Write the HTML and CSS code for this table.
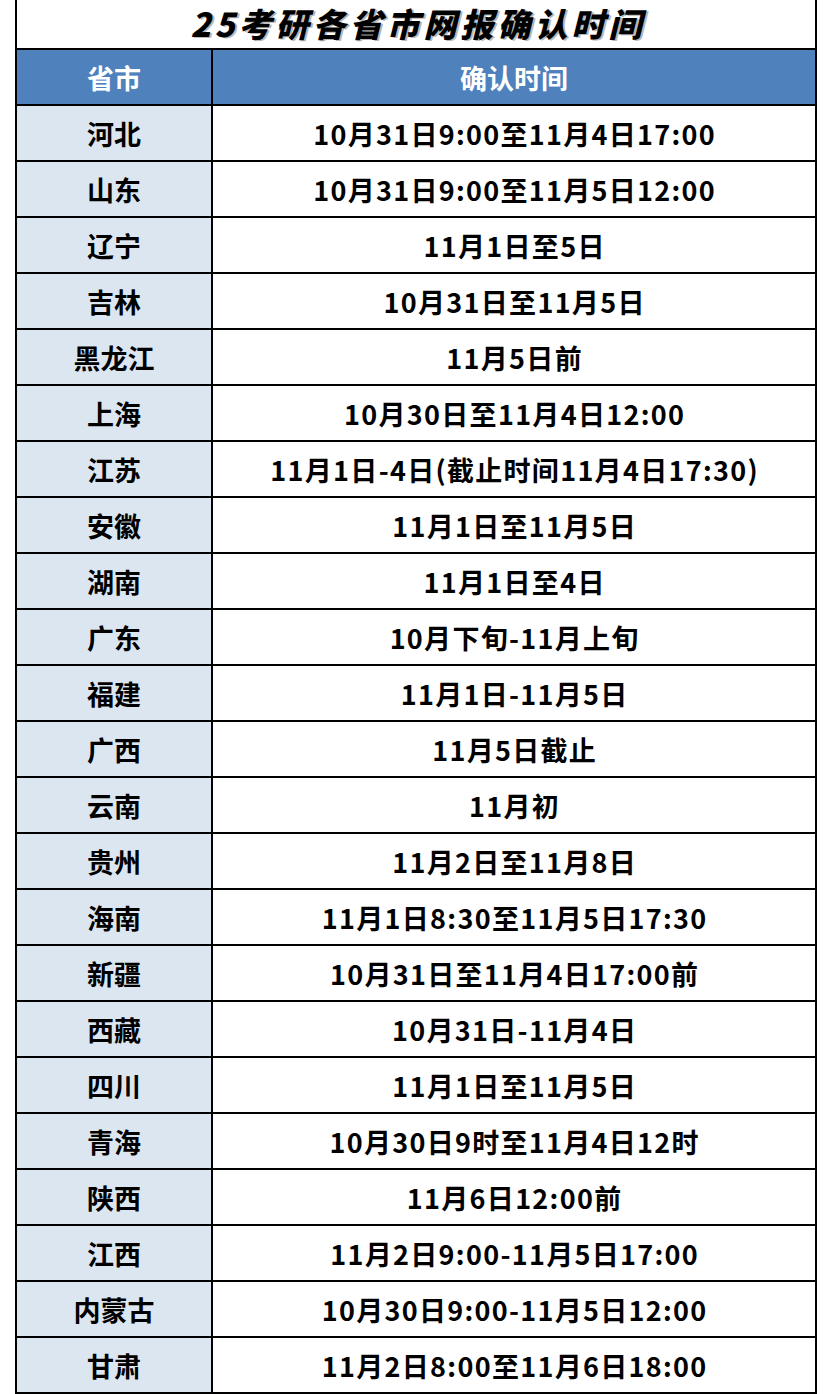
FILE: index.html
```html
<!DOCTYPE html>
<html lang="zh">
<head>
<meta charset="utf-8">
<link rel="stylesheet" href="styles.css">
</head>
<body>
<div class="sheet">
  <div class="title">25考研各省市网报确认时间</div>
  <table class="grid">
    <thead>
      <tr><th class="prov">省市</th><th>确认时间</th></tr>
    </thead>
    <tbody>
      <tr><td class="prov">河北</td><td>10月31日9:00至11月4日17:00</td></tr>
      <tr><td class="prov">山东</td><td>10月31日9:00至11月5日12:00</td></tr>
      <tr><td class="prov">辽宁</td><td>11月1日至5日</td></tr>
      <tr><td class="prov">吉林</td><td>10月31日至11月5日</td></tr>
      <tr><td class="prov">黑龙江</td><td>11月5日前</td></tr>
      <tr><td class="prov">上海</td><td>10月30日至11月4日12:00</td></tr>
      <tr><td class="prov">江苏</td><td>11月1日-4日(截止时间11月4日17:30)</td></tr>
      <tr><td class="prov">安徽</td><td>11月1日至11月5日</td></tr>
      <tr><td class="prov">湖南</td><td>11月1日至4日</td></tr>
      <tr><td class="prov">广东</td><td>10月下旬-11月上旬</td></tr>
      <tr><td class="prov">福建</td><td>11月1日-11月5日</td></tr>
      <tr><td class="prov">广西</td><td>11月5日截止</td></tr>
      <tr><td class="prov">云南</td><td>11月初</td></tr>
      <tr><td class="prov">贵州</td><td>11月2日至11月8日</td></tr>
      <tr><td class="prov">海南</td><td>11月1日8:30至11月5日17:30</td></tr>
      <tr><td class="prov">新疆</td><td>10月31日至11月4日17:00前</td></tr>
      <tr><td class="prov">西藏</td><td>10月31日-11月4日</td></tr>
      <tr><td class="prov">四川</td><td>11月1日至11月5日</td></tr>
      <tr><td class="prov">青海</td><td>10月30日9时至11月4日12时</td></tr>
      <tr><td class="prov">陕西</td><td>11月6日12:00前</td></tr>
      <tr><td class="prov">江西</td><td>11月2日9:00-11月5日17:00</td></tr>
      <tr><td class="prov">内蒙古</td><td>10月30日9:00-11月5日12:00</td></tr>
      <tr><td class="prov">甘肃</td><td>11月2日8:00至11月6日18:00</td></tr>
    </tbody>
  </table>
</div>
</body>
</html>
```

FILE: styles.css
```css
html, body {
  margin: 0;
  padding: 0;
  background: #ffffff;
}

.sheet {
  width: 802px;
  margin-left: 15px;
  font-family: "Noto Sans CJK SC", "Noto Sans", sans-serif;
}

.title {
  height: 48px;
  box-sizing: border-box;
  border-left: 2px solid #000;
  border-right: 2px solid #000;
  display: flex;
  align-items: center;
  justify-content: center;
  font-size: 33px;
  font-weight: 900;
  font-style: italic;
  letter-spacing: 4px;
  text-indent: 4px;
  color: #000;
  text-shadow: 2px 1px 0 #b8b8b8;
  line-height: 1;
  padding-bottom: 2px;
}

.grid {
  width: 802px;
  border-collapse: collapse;
  table-layout: fixed;
  border: 2px solid #000;
}

.grid th,
.grid td {
  border: 2px solid #000;
  height: 54px;
  padding: 0;
  text-align: center;
  vertical-align: middle;
  font-size: 27px;
  font-weight: 700;
  line-height: 1;
  color: #000;
}

.grid td {
  letter-spacing: 1.3px;
  text-indent: 1.3px;
}

.grid th {
  background: #4f81bd;
  color: #ffffff;
}

.grid .prov {
  width: 194px;
}

.grid td.prov {
  background: #dce6f1;
  letter-spacing: 0;
  text-indent: 0;
}
```
